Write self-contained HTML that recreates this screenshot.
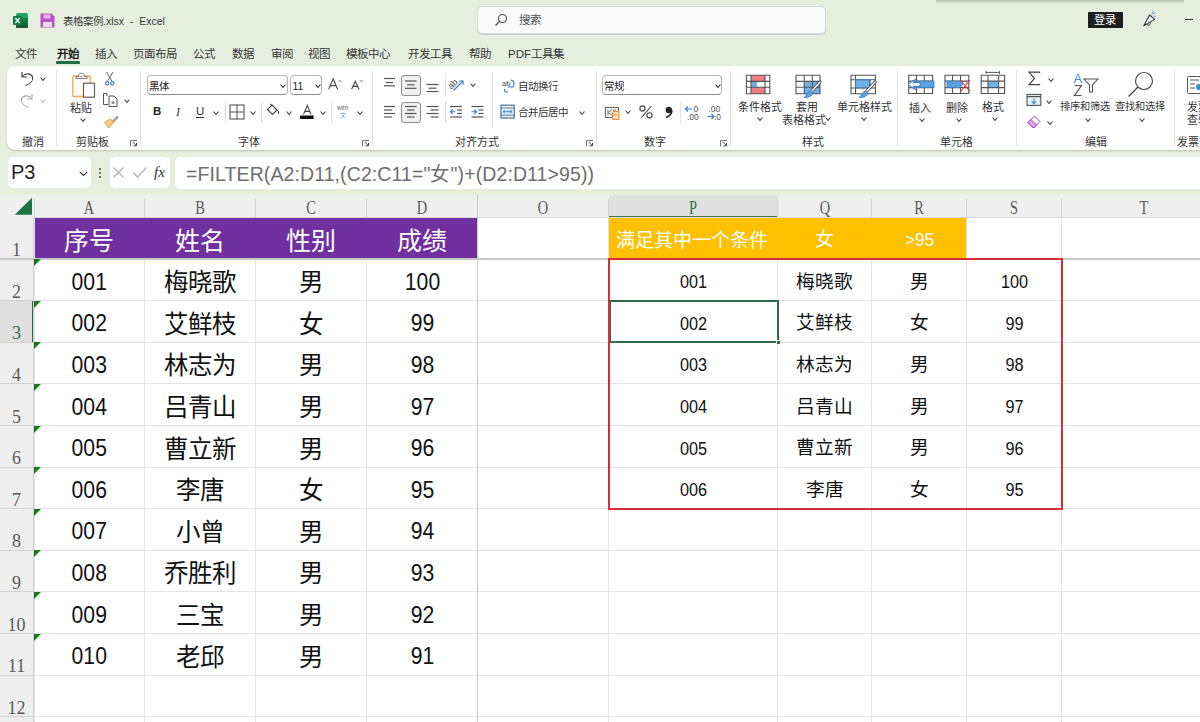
<!DOCTYPE html><html lang="zh-CN"><head><meta charset="utf-8"><style>
*{margin:0;padding:0;box-sizing:border-box}
html,body{width:1200px;height:722px;overflow:hidden}
body{background:#e6efde;font-family:"Liberation Sans",sans-serif;position:relative;color:#222}
.a{position:absolute}
.t{position:absolute;white-space:nowrap;line-height:1}
svg{position:absolute;overflow:visible}
</style></head><body>
<div class="a" style="left:936px;top:0;width:248px;height:4px;background:linear-gradient(to bottom, rgba(120,140,110,0.45), rgba(200,215,190,0))"></div>
<svg style="left:13px;top:13px" width="15" height="15" viewBox="0 0 15 15"><rect x="3" y="0" width="12" height="15" rx="1.5" fill="#21a366"/><rect x="3" y="5" width="12" height="5" fill="#107c41"/><rect x="3" y="10" width="12" height="5" rx="1" fill="#185c37"/><rect x="0" y="3" width="9" height="9" rx="1" fill="#107c41"/><path d="M2.3 5 L6.7 10 M6.7 5 L2.3 10" stroke="#fff" stroke-width="1.3"/></svg>
<svg style="left:40px;top:13px" width="15" height="15" viewBox="0 0 15 15"><path d="M1 0.5 H11.5 L14.5 3.5 V14.5 H0.5 V1 Z" fill="#b94fc2"/><rect x="3.5" y="1.5" width="7" height="4" fill="#e8b8ec"/><rect x="3" y="9" width="9" height="5" fill="#f2d6f4"/></svg>
<div class="t" style="left:63px;top:16px;font-size:10.5px;color:#3a3a3a">表格案例.xlsx&nbsp;&nbsp;-&nbsp;&nbsp;Excel</div>
<div class="a" style="left:478px;top:7px;width:347px;height:26px;background:#fafafa;border-radius:4px;box-shadow:0 0 0 1px #d6dcd2, 0 1px 0 1px #c9cfc6"></div>
<svg style="left:494px;top:13px" width="14" height="14" viewBox="0 0 14 14"><circle cx="8.5" cy="5.5" r="4" fill="none" stroke="#444" stroke-width="1.1"/><path d="M5.6 8.4 L1.5 12.5" stroke="#444" stroke-width="1.2"/></svg>
<div class="t" style="left:518.5px;top:14.5px;font-size:11.5px;color:#555">搜索</div>
<div class="a" style="left:1088px;top:12px;width:35px;height:16px;background:#1f1f1f"></div>
<div class="t" style="left:1094px;top:14.6px;font-size:11.2px;color:#fff">登录</div>
<svg style="left:1135px;top:8px" width="30" height="24" viewBox="1135 8 30 24"><path d="M1143.8 25.8 L1149.6 15 L1154.6 19.4 Z" fill="#fff" stroke="#333" stroke-width="1.1" stroke-linejoin="round"/><path d="M1146.6 24 C1147.8 26 1150.6 25.6 1150.4 22.6" fill="none" stroke="#333" stroke-width="1"/><path d="M1151.5 14.5 L1155.5 12.5 M1153.5 16 L1156 16.5 M1152.5 13 L1153 10.5" stroke="#5aa0d0" stroke-width="0.9"/></svg>
<div class="a" style="left:1185px;top:19px;width:8px;height:1.2px;background:#333"></div>
<div class="t" style="left:15px;top:49px;font-size:11.5px;color:#333;">文件</div>
<div class="t" style="left:57px;top:49px;font-size:11.5px;color:#333;font-weight:bold;color:#1b1b1b;">开始</div>
<div class="t" style="left:95px;top:49px;font-size:11.5px;color:#333;">插入</div>
<div class="t" style="left:133px;top:49px;font-size:11.5px;color:#333;">页面布局</div>
<div class="t" style="left:193px;top:49px;font-size:11.5px;color:#333;">公式</div>
<div class="t" style="left:232px;top:49px;font-size:11.5px;color:#333;">数据</div>
<div class="t" style="left:271px;top:49px;font-size:11.5px;color:#333;">审阅</div>
<div class="t" style="left:308px;top:49px;font-size:11.5px;color:#333;">视图</div>
<div class="t" style="left:346px;top:49px;font-size:11.5px;color:#333;">模板中心</div>
<div class="t" style="left:408px;top:49px;font-size:11.5px;color:#333;">开发工具</div>
<div class="t" style="left:469px;top:49px;font-size:11.5px;color:#333;">帮助</div>
<div class="t" style="left:508px;top:49px;font-size:11.5px;color:#333;">PDF工具集</div>
<div class="a" style="left:56px;top:61px;width:24px;height:2.5px;border-radius:1px;background:#1e7145"></div>
<div class="a" style="left:7px;top:66px;width:1220px;height:84px;background:#fff;border-radius:8px;box-shadow:0 1px 2px rgba(0,0,0,0.18)"></div>
<svg style="left:19px;top:70px" width="16" height="17" viewBox="0 0 16 17"><path d="M3 2 V7 H8" fill="none" stroke="#444" stroke-width="1.2"/><path d="M3.5 6.5 C6 3 12 3 13.5 7 C14.5 10 12 13.5 6.5 15.5" fill="none" stroke="#444" stroke-width="1.2"/></svg>
<svg style="left:40px;top:77px" width="6" height="4" viewBox="0 0 6 4"><path d="M0.5 0.5 L3.0 3.3 L5.5 0.5" fill="none" stroke="#444" stroke-width="1.1"/></svg>
<svg style="left:19px;top:92px" width="16" height="17" viewBox="0 0 16 17"><path d="M13 2 V7 H8" fill="none" stroke="#aaa" stroke-width="1.2"/><path d="M12.5 6.5 C10 3 4 3 2.5 7 C1.5 10 4 13.5 9.5 15.5" fill="none" stroke="#aaa" stroke-width="1.2"/></svg>
<svg style="left:40px;top:99px" width="6" height="4" viewBox="0 0 6 4"><path d="M0.5 0.5 L3.0 3.3 L5.5 0.5" fill="none" stroke="#bbb" stroke-width="1.1"/></svg>
<div class="t" style="left:22px;top:137.10000000000002px;font-size:11px;color:#333;">撤消</div>
<div class="a" style="left:56px;top:70px;width:1px;height:76px;background:#e3e3e3"></div>
<svg style="left:66px;top:68px" width="60" height="62" viewBox="0 0 60 62"><rect x="6.8" y="8" width="17.5" height="20.5" rx="1" fill="#fffaf3" stroke="#f2a65a" stroke-width="1.3"/><path d="M10 8.5 H21 V10.5 H10 Z" fill="#eef3f8" stroke="#777" stroke-width="0.9"/><path d="M12.5 8.5 C12.5 6 13.5 5.2 15.5 5.2 C17.5 5.2 18.5 6 18.5 8.5" fill="#fff" stroke="#777" stroke-width="0.9"/><rect x="17.5" y="15.2" width="11" height="14" fill="#fff" stroke="#555" stroke-width="1.1"/><path d="M40.5 4 L47 15 M47 4 L40.5 15" stroke="#555" stroke-width="0.9"/><circle cx="41.2" cy="15.3" r="1.7" fill="#fff" stroke="#3a7fc4" stroke-width="1.1"/><circle cx="46.3" cy="15.3" r="1.7" fill="#fff" stroke="#3a7fc4" stroke-width="1.1"/><path d="M41 28 V25.5 H37.5 V36.5 H42" fill="none" stroke="#555" stroke-width="1"/><path d="M43 28 H48 L51 31 V38.5 H43 Z" fill="#fff" stroke="#555" stroke-width="1"/><rect x="45.5" y="33" width="3" height="3" fill="#999"/><path d="M45.5 54 L50.5 49 C51.5 48 52.5 49 51.5 50 L46.5 55" fill="#fff" stroke="#555" stroke-width="1"/><path d="M38.5 54.5 L44.5 51 L47.5 54 L43 60 Z" fill="#f7c98b" stroke="#e89545" stroke-width="1"/></svg>
<div class="t" style="left:70px;top:102.8px;font-size:11px;color:#333;">粘贴</div>
<svg style="left:79.5px;top:118px" width="6" height="4" viewBox="0 0 6 4"><path d="M0.5 0.5 L3.0 3.3 L5.5 0.5" fill="none" stroke="#444" stroke-width="1.1"/></svg>
<svg style="left:123.5px;top:99px" width="6" height="4" viewBox="0 0 6 4"><path d="M0.5 0.5 L3.0 3.3 L5.5 0.5" fill="none" stroke="#444" stroke-width="1.1"/></svg>
<div class="t" style="left:76px;top:137.10000000000002px;font-size:11px;color:#333;">剪贴板</div>
<svg style="left:130px;top:140px" width="8" height="7" viewBox="0 0 8 7"><path d="M0.5 6.5 V0.5 H7" fill="none" stroke="#666" stroke-width="0.9"/><path d="M2.5 1.8 L6.5 5.8 M6.5 2.8 V5.8 H3.5" fill="none" stroke="#444" stroke-width="1"/></svg>
<div class="a" style="left:140px;top:70px;width:1px;height:76px;background:#e3e3e3"></div>
<div class="a" style="left:146.5px;top:75px;width:141.0px;height:20px;border:1px solid #b8b8b8;border-bottom-color:#8a8a8a;border-radius:4px;background:#fff"></div>
<div class="t" style="left:149.0px;top:81.3px;font-size:10.5px;color:#222;">黑体</div>
<svg style="left:280px;top:84px" width="6" height="4" viewBox="0 0 6 4"><path d="M0.5 0.5 L3.0 3.3 L5.5 0.5" fill="none" stroke="#333" stroke-width="1.1"/></svg>
<div class="a" style="left:289.5px;top:75px;width:32.0px;height:20px;border:1px solid #b8b8b8;border-bottom-color:#8a8a8a;border-radius:4px;background:#fff"></div>
<div class="t" style="left:292.5px;top:80.5px;font-size:10.5px;color:#222;">11</div>
<svg style="left:315px;top:84px" width="6" height="4" viewBox="0 0 6 4"><path d="M0.5 0.5 L3.0 3.3 L5.5 0.5" fill="none" stroke="#333" stroke-width="1.1"/></svg>
<svg style="left:320px;top:70px" width="50" height="25" viewBox="0 0 50 25"><path d="M8.7 19.2 L13.2 8.9 L17.6 19.2 M10.3 15.6 H16.1" fill="none" stroke="#444" stroke-width="1.1"/><path d="M18.5 12 L20 10.3 L21.5 12" fill="none" stroke="#3a7fc4" stroke-width="0.9"/><path d="M31.6 19.2 L35.3 11.2 L39 19.2 M32.9 16.4 H37.7" fill="none" stroke="#444" stroke-width="1.1"/><path d="M40 10.2 L41.5 11.7 L43 10.2" fill="none" stroke="#3a7fc4" stroke-width="0.9"/></svg>
<div class="t" style="left:153px;top:106px;font-size:11.5px;color:#222;font-weight:bold">B</div>
<div class="t" style="left:176px;top:106px;font-size:12px;color:#444;font-family:'Liberation Serif',serif;font-style:italic">I</div>
<div class="t" style="left:196px;top:106px;font-size:11.5px;color:#333;">U</div>
<div class="a" style="left:196px;top:117px;width:8px;height:1px;background:#333"></div>
<svg style="left:213px;top:111px" width="6" height="4" viewBox="0 0 6 4"><path d="M0.5 0.5 L3.0 3.3 L5.5 0.5" fill="none" stroke="#444" stroke-width="1.1"/></svg>
<div class="a" style="left:225px;top:102px;width:1px;height:21px;background:#e3e3e3"></div>
<svg style="left:229px;top:104px" width="15" height="15" viewBox="0 0 15 15"><rect x="1" y="1" width="14" height="14" fill="none" stroke="#555" stroke-width="1.1"/><path d="M8 1 V15 M1 8 H15" stroke="#555" stroke-width="1.1"/></svg>
<svg style="left:250px;top:111px" width="6" height="4" viewBox="0 0 6 4"><path d="M0.5 0.5 L3.0 3.3 L5.5 0.5" fill="none" stroke="#444" stroke-width="1.1"/></svg>
<div class="a" style="left:261px;top:102px;width:1px;height:21px;background:#e3e3e3"></div>
<svg style="left:266px;top:103px" width="14" height="13" viewBox="0 0 14 13"><path d="M6 2 L11 7 L6.5 11.5 L1.5 6.5 Z" fill="#fff" stroke="#444" stroke-width="1.1"/><path d="M11 7 C13 8 13 10 12 11" fill="none" stroke="#444" stroke-width="1"/><path d="M4 1 L6 2" stroke="#444"/></svg>
<svg style="left:286px;top:111px" width="6" height="4" viewBox="0 0 6 4"><path d="M0.5 0.5 L3.0 3.3 L5.5 0.5" fill="none" stroke="#444" stroke-width="1.1"/></svg>
<svg style="left:298px;top:102px" width="18" height="18" viewBox="0 0 18 18"><path d="M5.5 12.4 L9.3 3.5 L13 12.4 M6.8 9.4 H11.8" fill="none" stroke="#444" stroke-width="1.1"/><rect x="2" y="13.5" width="13.6" height="3.5" fill="#111"/></svg>
<svg style="left:320px;top:111px" width="6" height="4" viewBox="0 0 6 4"><path d="M0.5 0.5 L3.0 3.3 L5.5 0.5" fill="none" stroke="#444" stroke-width="1.1"/></svg>
<div class="a" style="left:331px;top:102px;width:1px;height:21px;background:#e3e3e3"></div>
<div class="t" style="left:337px;top:104.5px;font-size:6.3px;color:#666;">wén</div>
<div class="t" style="left:340.3px;top:113.0px;font-size:5.8px;color:#5aa0d8;">文</div>
<svg style="left:357px;top:111px" width="6" height="4" viewBox="0 0 6 4"><path d="M0.5 0.5 L3.0 3.3 L5.5 0.5" fill="none" stroke="#444" stroke-width="1.1"/></svg>
<div class="t" style="left:238px;top:137.10000000000002px;font-size:11px;color:#333;">字体</div>
<svg style="left:362px;top:140px" width="8" height="7" viewBox="0 0 8 7"><path d="M0.5 6.5 V0.5 H7" fill="none" stroke="#666" stroke-width="0.9"/><path d="M2.5 1.8 L6.5 5.8 M6.5 2.8 V5.8 H3.5" fill="none" stroke="#444" stroke-width="1"/></svg>
<div class="a" style="left:372px;top:70px;width:1px;height:76px;background:#e3e3e3"></div>
<div class="a" style="left:401px;top:75px;width:20px;height:20.5px;border:1px solid #8c8c8c;border-radius:3px;background:#f0f0f0"></div>
<div class="a" style="left:401px;top:102px;width:20px;height:20.5px;border:1px solid #8c8c8c;border-radius:3px;background:#f0f0f0"></div>
<svg style="left:0;top:0" width="600" height="150" viewBox="0 0 600 150"><path d="M384 78.5 H395" stroke="#555" stroke-width="1.2"/><path d="M386 82.5 H393" stroke="#555" stroke-width="1.2"/><path d="M384 85.8 H395" stroke="#555" stroke-width="1.2"/><path d="M405 81 H416.5" stroke="#555" stroke-width="1.2"/><path d="M407 84.8 H414.5" stroke="#555" stroke-width="1.2"/><path d="M405 88.3 H416.5" stroke="#555" stroke-width="1.2"/><path d="M426.5 84.5 H438.5" stroke="#555" stroke-width="1.2"/><path d="M428.5 88.2 H436.5" stroke="#555" stroke-width="1.2"/><path d="M426.5 91.5 H438.5" stroke="#555" stroke-width="1.2"/><path d="M384 106.5 H395" stroke="#555" stroke-width="1.2"/><path d="M384 110 H392" stroke="#555" stroke-width="1.2"/><path d="M384 113.5 H395" stroke="#555" stroke-width="1.2"/><path d="M384 117 H392" stroke="#555" stroke-width="1.2"/><path d="M405 106.5 H416.5" stroke="#555" stroke-width="1.2"/><path d="M407 110 H414.5" stroke="#555" stroke-width="1.2"/><path d="M405 113.5 H416.5" stroke="#555" stroke-width="1.2"/><path d="M407 117 H414.5" stroke="#555" stroke-width="1.2"/><path d="M426.5 106.5 H438.5" stroke="#555" stroke-width="1.2"/><path d="M430.5 110 H438.5" stroke="#555" stroke-width="1.2"/><path d="M426.5 113.5 H438.5" stroke="#555" stroke-width="1.2"/><path d="M430.5 117 H438.5" stroke="#555" stroke-width="1.2"/><path d="M450 106.5 H462" stroke="#555" stroke-width="1.2"/><path d="M457 110 H462" stroke="#555" stroke-width="1.2"/><path d="M457 113.5 H462" stroke="#555" stroke-width="1.2"/><path d="M450 117 H462" stroke="#555" stroke-width="1.2"/><path d="M455.5 111.8 H450.5 M452.8 109.5 L450.5 111.8 L452.8 114" fill="none" stroke="#3a7fc4" stroke-width="1.1"/><path d="M471.5 106.5 H483.5" stroke="#555" stroke-width="1.2"/><path d="M478.5 110 H483.5" stroke="#555" stroke-width="1.2"/><path d="M478.5 113.5 H483.5" stroke="#555" stroke-width="1.2"/><path d="M471.5 117 H483.5" stroke="#555" stroke-width="1.2"/><path d="M471.5 111.8 H476.5 M474.2 109.5 L476.5 111.8 L474.2 114" fill="none" stroke="#3a7fc4" stroke-width="1.1"/><path d="M453.5 90.5 L463 81" stroke="#3a7fc4" stroke-width="1.1"/><path d="M459 81 H463 V85" fill="none" stroke="#3a7fc4" stroke-width="1.1"/></svg>
<div class="t" style="left:448px;top:80px;font-size:9px;color:#444;transform:rotate(-45deg);transform-origin:50% 50%">ab</div>
<svg style="left:470px;top:83px" width="6" height="4" viewBox="0 0 6 4"><path d="M0.5 0.5 L3.0 3.3 L5.5 0.5" fill="none" stroke="#444" stroke-width="1.1"/></svg>
<div class="a" style="left:445px;top:74px;width:1px;height:22px;background:#e3e3e3"></div>
<div class="a" style="left:445px;top:101px;width:1px;height:22px;background:#e3e3e3"></div>
<div class="a" style="left:492px;top:73px;width:1px;height:54px;background:#e3e3e3"></div>
<svg style="left:502px;top:79px" width="14" height="14" viewBox="0 0 14 14"><text x="0" y="7" font-size="7.5" fill="#444" font-family="Liberation Sans">ab</text><path d="M9 1 C13 2 13 8 9 8 H6" fill="none" stroke="#3a7fc4" stroke-width="1.1"/><path d="M3 10 C1 12 4 13 6 13" fill="none" stroke="#3a7fc4" stroke-width="1.1"/></svg>
<div class="t" style="left:518.3px;top:80.8px;font-size:10.5px;color:#333;">自动换行</div>
<svg style="left:500px;top:104px" width="16" height="16" viewBox="0 0 16 16"><rect x="1" y="1.2" width="13.2" height="12.8" fill="#f4f8fc" stroke="#4a6f92" stroke-width="1.2"/><path d="M1 4 H14.2 M1 11.2 H14.2" stroke="#4a6f92" stroke-width="0.9"/><rect x="2" y="5.5" width="11.2" height="4.4" fill="#cfe3f5"/><path d="M3.2 7.7 H12 M4.8 6.2 L3.2 7.7 L4.8 9.2 M10.4 6.2 L12 7.7 L10.4 9.2" fill="none" stroke="#3a7fc4" stroke-width="0.9"/></svg>
<div class="t" style="left:518.3px;top:107.3px;font-size:10.5px;color:#333;">合并后居中</div>
<svg style="left:579px;top:111px" width="6" height="4" viewBox="0 0 6 4"><path d="M0.5 0.5 L3.0 3.3 L5.5 0.5" fill="none" stroke="#444" stroke-width="1.1"/></svg>
<div class="t" style="left:455px;top:137.10000000000002px;font-size:11px;color:#333;">对齐方式</div>
<svg style="left:586px;top:140px" width="8" height="7" viewBox="0 0 8 7"><path d="M0.5 6.5 V0.5 H7" fill="none" stroke="#666" stroke-width="0.9"/><path d="M2.5 1.8 L6.5 5.8 M6.5 2.8 V5.8 H3.5" fill="none" stroke="#444" stroke-width="1"/></svg>
<div class="a" style="left:596px;top:70px;width:1px;height:76px;background:#e3e3e3"></div>
<div class="a" style="left:601.5px;top:75px;width:120.0px;height:20px;border:1px solid #b8b8b8;border-bottom-color:#8a8a8a;border-radius:4px;background:#fff"></div>
<div class="t" style="left:604.0px;top:81.3px;font-size:10.5px;color:#222;">常规</div>
<svg style="left:714.5px;top:84px" width="6" height="4" viewBox="0 0 6 4"><path d="M0.5 0.5 L3.0 3.3 L5.5 0.5" fill="none" stroke="#333" stroke-width="1.1"/></svg>
<svg style="left:605px;top:107px" width="16" height="13" viewBox="0 0 16 13"><rect x="0.5" y="0.5" width="13" height="10" fill="#fff" stroke="#666" stroke-width="1.1"/><path d="M3 2.5 V8.5 M7 2.5 L3.5 5.5 L7 8.5 M8 3 H11" fill="none" stroke="#666" stroke-width="1"/><rect x="7.5" y="4.5" width="6.5" height="8" rx="1" fill="#fde2c4" stroke="#f08a2b" stroke-width="1.1"/><path d="M9 8 H12.5" stroke="#f08a2b" stroke-width="0.9"/></svg>
<svg style="left:625px;top:110px" width="6" height="4" viewBox="0 0 6 4"><path d="M0.5 0.5 L3.0 3.3 L5.5 0.5" fill="none" stroke="#444" stroke-width="1.1"/></svg>
<svg style="left:639px;top:105px" width="15" height="14" viewBox="0 0 15 14"><circle cx="3.5" cy="3.5" r="2.6" fill="none" stroke="#444" stroke-width="1.1"/><circle cx="10.5" cy="10.3" r="2.6" fill="none" stroke="#444" stroke-width="1.1"/><path d="M12.5 1 L2 13" stroke="#444" stroke-width="1.1"/></svg>
<svg style="left:664px;top:106px" width="9" height="12" viewBox="0 0 9 12"><circle cx="4.8" cy="4" r="3.2" fill="#222"/><path d="M7.8 4 C8 7.5 6 10 2 11.5" fill="none" stroke="#222" stroke-width="1.6"/></svg>
<div class="a" style="left:680px;top:102px;width:1px;height:22px;background:#e3e3e3"></div>
<svg style="left:683px;top:104px" width="17" height="17" viewBox="0 0 17 17"><text x="10.5" y="8" font-size="8.5" fill="#555" font-family="Liberation Sans">0</text><text x="4" y="15.5" font-size="8.5" fill="#555" font-family="Liberation Sans">.00</text><path d="M9 5 H2.5 M5 2.5 L2.5 5 L5 7.5" fill="none" stroke="#3a7fc4" stroke-width="1.2"/></svg>
<svg style="left:706px;top:104px" width="17" height="17" viewBox="0 0 17 17"><text x="2.5" y="8" font-size="8.5" fill="#555" font-family="Liberation Sans">.00</text><text x="8" y="15.5" font-size="8.5" fill="#555" font-family="Liberation Sans">.0</text><path d="M1.5 12.5 H8 M5.5 10 L8 12.5 L5.5 15" fill="none" stroke="#3a7fc4" stroke-width="1.2"/></svg>
<div class="t" style="left:644px;top:137.10000000000002px;font-size:11px;color:#333;">数字</div>
<svg style="left:720px;top:140px" width="8" height="7" viewBox="0 0 8 7"><path d="M0.5 6.5 V0.5 H7" fill="none" stroke="#666" stroke-width="0.9"/><path d="M2.5 1.8 L6.5 5.8 M6.5 2.8 V5.8 H3.5" fill="none" stroke="#444" stroke-width="1"/></svg>
<div class="a" style="left:730px;top:70px;width:1px;height:76px;background:#e3e3e3"></div>
<svg style="left:740px;top:68px" width="40" height="30" viewBox="0 0 40 30"><rect x="11" y="7.2" width="14" height="6.2" fill="#f37b82"/><rect x="11" y="13.4" width="6" height="5.9" fill="#6fb0ea"/><rect x="11" y="19.3" width="14" height="6.4" fill="#f37b82"/><path d="M6.4 7.2 H29.8 V25.7 H6.4 Z M11 7.2 V25.7 M25 7.2 V25.7 M6.4 13.4 H29.8 M6.4 19.3 H29.8" fill="none" stroke="#555" stroke-width="1.1"/></svg>
<div class="t" style="left:738px;top:101.8px;font-size:11px;color:#333;">条件格式</div>
<svg style="left:757px;top:117px" width="6" height="4" viewBox="0 0 6 4"><path d="M0.5 0.5 L3.0 3.3 L5.5 0.5" fill="none" stroke="#444" stroke-width="1.1"/></svg>
<svg style="left:780px;top:68px" width="50" height="32" viewBox="0 0 50 32"><rect x="24.2" y="13.4" width="15.8" height="12.3" fill="#6fb0ea"/><path d="M16 7.2 H40 V25.7 H16 Z M24.2 7.2 V25.7 M32.3 7.2 V25.7 M16 13.4 H40 M16 19.3 H40" fill="none" stroke="#555" stroke-width="1.1"/><g transform="translate(23 13)"><path d="M17 1 L8 11" stroke="#444" stroke-width="3.2" stroke-linecap="round"/><path d="M17 1 L8 11" stroke="#fff" stroke-width="1.4" stroke-linecap="round"/><path d="M7.5 10 C4.5 10.5 4 14 1 16.5 C5.5 17 9.5 15 9.8 12 Z" fill="#5aa0e0" stroke="#3a7fc4" stroke-width="0.8"/></g></svg>
<div class="t" style="left:796px;top:101.8px;font-size:11px;color:#333;">套用</div>
<div class="t" style="left:782px;top:114.8px;font-size:11px;color:#333;">表格格式</div>
<svg style="left:825px;top:117px" width="6" height="4" viewBox="0 0 6 4"><path d="M0.5 0.5 L3.0 3.3 L5.5 0.5" fill="none" stroke="#444" stroke-width="1.1"/></svg>
<svg style="left:840px;top:68px" width="50" height="32" viewBox="0 0 50 32"><rect x="16" y="12" width="14" height="8" fill="#6fb0ea"/><path d="M11 7.2 H35.4 V25.7 H11 Z M15.5 7.2 V25.7 M11 11.7 H35.4 M11 20 H35.4 M30 11.7 V20" fill="none" stroke="#555" stroke-width="1.1"/><rect x="15.5" y="11.7" width="14.5" height="8.3" fill="none" stroke="#3a7fc4" stroke-width="0.8"/><g transform="translate(18 13)"><path d="M17 1 L8 11" stroke="#444" stroke-width="3.2" stroke-linecap="round"/><path d="M17 1 L8 11" stroke="#fff" stroke-width="1.4" stroke-linecap="round"/><path d="M7.5 10 C4.5 10.5 4 14 1 16.5 C5.5 17 9.5 15 9.8 12 Z" fill="#5aa0e0" stroke="#3a7fc4" stroke-width="0.8"/></g></svg>
<div class="t" style="left:836.5px;top:101.8px;font-size:11px;color:#333;">单元格样式</div>
<svg style="left:861px;top:117px" width="6" height="4" viewBox="0 0 6 4"><path d="M0.5 0.5 L3.0 3.3 L5.5 0.5" fill="none" stroke="#444" stroke-width="1.1"/></svg>
<div class="t" style="left:802px;top:137.10000000000002px;font-size:11px;color:#333;">样式</div>
<div class="a" style="left:897px;top:70px;width:1px;height:76px;background:#e3e3e3"></div>
<svg style="left:900px;top:66px" width="40" height="32" viewBox="0 0 40 32"><path d="M8.7 9.2 H32.6 V27.5 H8.7 Z M16.5 9.2 V27.5 M24.3 9.2 V27.5 M8.7 15.1 H32.6 M8.7 21.6 H32.6" fill="none" stroke="#555" stroke-width="1.1"/><rect x="13" y="15.1" width="21" height="6.5" fill="#5aa0e0" stroke="#3a7fc4" stroke-width="0.8"/><path d="M20 16.5 H13 L15.5 13 L8 18.4 L15.5 23.8 L13 20.3 H20 Z" fill="#fff" stroke="#3a7fc4" stroke-width="1"/></svg>
<div class="t" style="left:909px;top:103.3px;font-size:11px;color:#333;">插入</div>
<svg style="left:919px;top:118px" width="6" height="4" viewBox="0 0 6 4"><path d="M0.5 0.5 L3.0 3.3 L5.5 0.5" fill="none" stroke="#444" stroke-width="1.1"/></svg>
<svg style="left:940px;top:66px" width="36" height="32" viewBox="0 0 36 32"><path d="M5 9.2 H28.8 V27.5 H5 Z M12.5 9.2 V27.5 M20.5 9.2 V27.5 M5 15.1 H28.8 M5 21.6 H28.8" fill="none" stroke="#555" stroke-width="1.1"/><path d="M7 15.1 H20 L23 18.4 L20 21.6 H7 Z" fill="#5aa0e0" stroke="#3a7fc4" stroke-width="0.8"/><path d="M20.5 14 L30 25.5 M30 14 L20.5 25.5" stroke="#e0303a" stroke-width="1.1"/></svg>
<div class="t" style="left:946px;top:103.3px;font-size:11px;color:#333;">删除</div>
<svg style="left:956px;top:118px" width="6" height="4" viewBox="0 0 6 4"><path d="M0.5 0.5 L3.0 3.3 L5.5 0.5" fill="none" stroke="#444" stroke-width="1.1"/></svg>
<svg style="left:975px;top:66px" width="36" height="32" viewBox="0 0 36 32"><rect x="13" y="15.1" width="10.6" height="6.5" fill="#6fb0ea"/><path d="M6.2 9.2 H29.6 V27.5 H6.2 Z M13 9.2 V27.5 M23.6 9.2 V27.5 M6.2 15.1 H29.6 M6.2 21.6 H29.6" fill="none" stroke="#555" stroke-width="1.1"/><path d="M11 6.4 H24.6 M11 4.9 V7.9 M24.6 4.9 V7.9" stroke="#555" stroke-width="1"/></svg>
<div class="t" style="left:982px;top:101.8px;font-size:11px;color:#333;">格式</div>
<svg style="left:992px;top:117px" width="6" height="4" viewBox="0 0 6 4"><path d="M0.5 0.5 L3.0 3.3 L5.5 0.5" fill="none" stroke="#444" stroke-width="1.1"/></svg>
<div class="t" style="left:940px;top:137.10000000000002px;font-size:11px;color:#333;">单元格</div>
<div class="a" style="left:1016px;top:70px;width:1px;height:76px;background:#e3e3e3"></div>
<svg style="left:1026px;top:70px" width="16" height="16" viewBox="0 0 16 16"><path d="M13.5 3 V2.2 H3 L8.5 8.4 L3 14.6 H13.5 V13.8" fill="none" stroke="#444" stroke-width="1.2"/></svg>
<svg style="left:1047.5px;top:78px" width="6" height="4" viewBox="0 0 6 4"><path d="M0.5 0.5 L3.0 3.3 L5.5 0.5" fill="none" stroke="#444" stroke-width="1.1"/></svg>
<svg style="left:1026px;top:93px" width="16" height="14" viewBox="0 0 16 14"><rect x="1" y="1.4" width="13.8" height="11" fill="#e4f0fa" stroke="#555" stroke-width="1.1"/><path d="M1 3.6 H14.8" stroke="#555" stroke-width="1.3"/><path d="M7.9 5.5 V10.5 M5.6 8.3 L7.9 10.6 L10.2 8.3" fill="none" stroke="#3a8fd0" stroke-width="1.1"/></svg>
<svg style="left:1046px;top:100px" width="6" height="4" viewBox="0 0 6 4"><path d="M0.5 0.5 L3.0 3.3 L5.5 0.5" fill="none" stroke="#444" stroke-width="1.1"/></svg>
<svg style="left:1026px;top:114px" width="16" height="15" viewBox="0 0 16 15"><path d="M2 8.5 L8.5 2 L14 7.5 L7.5 14 Z" fill="#fff" stroke="#9b3fb0" stroke-width="1"/><path d="M5 5.5 L10.5 11 L7.5 14 L2 8.5 Z" fill="#e3a8ef" stroke="#9b3fb0" stroke-width="1"/></svg>
<svg style="left:1046.5px;top:121px" width="6" height="4" viewBox="0 0 6 4"><path d="M0.5 0.5 L3.0 3.3 L5.5 0.5" fill="none" stroke="#444" stroke-width="1.1"/></svg>
<svg style="left:1072px;top:72px" width="28" height="26" viewBox="0 0 28 26"><text x="1.5" y="11.3" font-size="13" fill="#3a8fd0" font-family="Liberation Sans">A</text><path d="M2.7 13.5 H9.5 L2.5 23.5 H9.5" fill="none" stroke="#555" stroke-width="1.2"/><path d="M12 7 H26 L20.5 13 V20 H17.5 V13 Z" fill="none" stroke="#555" stroke-width="1.1"/></svg>
<div class="t" style="left:1060.3px;top:102.3px;font-size:10.2px;color:#333;">排序和筛选</div>
<svg style="left:1085px;top:118px" width="6" height="4" viewBox="0 0 6 4"><path d="M0.5 0.5 L3.0 3.3 L5.5 0.5" fill="none" stroke="#444" stroke-width="1.1"/></svg>
<svg style="left:1127px;top:71px" width="28" height="27" viewBox="0 0 28 27"><circle cx="17" cy="10" r="8.5" fill="none" stroke="#444" stroke-width="1.1"/><path d="M11 16 L1.5 25.5" stroke="#444" stroke-width="1.2"/></svg>
<div class="t" style="left:1114.8px;top:102.3px;font-size:10.2px;color:#333;">查找和选择</div>
<svg style="left:1139px;top:118px" width="6" height="4" viewBox="0 0 6 4"><path d="M0.5 0.5 L3.0 3.3 L5.5 0.5" fill="none" stroke="#444" stroke-width="1.1"/></svg>
<div class="t" style="left:1085px;top:137.10000000000002px;font-size:11px;color:#333;">编辑</div>
<div class="a" style="left:1174px;top:70px;width:1px;height:76px;background:#e3e3e3"></div>
<svg style="left:1187px;top:76px" width="16" height="18" viewBox="0 0 16 18"><rect x="0.5" y="0.5" width="15" height="17" rx="1" fill="none" stroke="#555" stroke-width="1"/><path d="M3 4 H12 M3 8 H8 M3 12 H8" stroke="#555"/><circle cx="12" cy="11" r="3" fill="#3a8fd0"/></svg>
<div class="t" style="left:1187px;top:102.3px;font-size:11px;color:#333;">发票</div>
<div class="t" style="left:1187px;top:114.8px;font-size:11px;color:#333;">查验</div>
<div class="t" style="left:1177px;top:137.10000000000002px;font-size:11px;color:#333;">发票查验</div>
<div class="a" style="left:8px;top:157px;width:83px;height:31px;background:#fff;border-radius:5px"></div>
<div class="t" style="left:11px;top:162px;font-size:20px;color:#222">P3</div>
<svg style="left:79px;top:171px" width="9" height="6" viewBox="0 0 9 6"><path d="M0.8 0.8 L4.5 4.5 L8.2 0.8" fill="none" stroke="#333" stroke-width="1.2"/></svg>
<div class="a" style="left:99px;top:167.5px;width:2px;height:2px;border-radius:1px;background:#444"></div>
<div class="a" style="left:99px;top:171.5px;width:2px;height:2px;border-radius:1px;background:#444"></div>
<div class="a" style="left:99px;top:175.5px;width:2px;height:2px;border-radius:1px;background:#444"></div>
<div class="a" style="left:110px;top:157px;width:60px;height:31px;background:#fff;border-radius:5px"></div>
<svg style="left:112px;top:166px" width="13" height="13" viewBox="0 0 13 13"><path d="M1.5 1.5 L11.5 11.5 M11.5 1.5 L1.5 11.5" stroke="#b0b0b0" stroke-width="1.2"/></svg>
<svg style="left:132px;top:166px" width="16" height="13" viewBox="0 0 16 13"><path d="M1.5 6.5 L5.5 11 L14.5 1.5" fill="none" stroke="#b0b0b0" stroke-width="1.2"/></svg>
<div class="t" style="left:154px;top:165px;font-size:15px;color:#333;font-family:'Liberation Serif',serif;font-style:italic">fx</div>
<div class="a" style="left:175px;top:157px;width:1100px;height:31.5px;background:#fff;border-radius:5px"></div>
<div class="t" style="left:186px;top:164.5px;font-size:19.5px;color:#6e6e6e;letter-spacing:0.1px">=FILTER(A2:D11,(C2:C11=&quot;女&quot;)+(D2:D11&gt;95))</div>
<div class="a" style="left:0;top:195px;width:1200px;height:527px;background:#fff"></div>
<div class="a" style="left:0;top:195px;width:1200px;height:22.5px;background:#efefef"></div>
<div class="a" style="left:0;top:217.5px;width:34px;height:504.5px;background:#efefef"></div>
<div class="a" style="left:608.5px;top:195px;width:169.0px;height:22.5px;background:#e0e0e0;border-bottom:2px solid #3d7a50"></div>
<div class="a" style="left:0;top:300.7px;width:34px;height:41.6px;background:#e0e0e0;border-right:2px solid #2a6a3e"></div>
<div class="a" style="left:34px;top:217.5px;width:443.5px;height:41.6px;background:#7030a0"></div>
<div class="a" style="left:608.5px;top:217.5px;width:358.0px;height:41.6px;background:#ffc000"></div>
<div class="a" style="left:33.5px;top:199px;width:1px;height:18.5px;background:#d4d4d4"></div>
<div class="a" style="left:33.5px;top:217.5px;width:1px;height:504.5px;background:#e4e4e4"></div>
<div class="a" style="left:144.0px;top:199px;width:1px;height:18.5px;background:#d4d4d4"></div>
<div class="a" style="left:144.0px;top:259.1px;width:1px;height:462.9px;background:#e4e4e4"></div>
<div class="a" style="left:255.0px;top:199px;width:1px;height:18.5px;background:#d4d4d4"></div>
<div class="a" style="left:255.0px;top:259.1px;width:1px;height:462.9px;background:#e4e4e4"></div>
<div class="a" style="left:366.0px;top:199px;width:1px;height:18.5px;background:#d4d4d4"></div>
<div class="a" style="left:366.0px;top:259.1px;width:1px;height:462.9px;background:#e4e4e4"></div>
<div class="a" style="left:477.0px;top:199px;width:1px;height:18.5px;background:#d4d4d4"></div>
<div class="a" style="left:477.0px;top:217.5px;width:1px;height:504.5px;background:#e4e4e4"></div>
<div class="a" style="left:608.0px;top:199px;width:1px;height:18.5px;background:#d4d4d4"></div>
<div class="a" style="left:608.0px;top:217.5px;width:1px;height:504.5px;background:#e4e4e4"></div>
<div class="a" style="left:777.0px;top:199px;width:1px;height:18.5px;background:#d4d4d4"></div>
<div class="a" style="left:777.0px;top:259.1px;width:1px;height:462.9px;background:#e4e4e4"></div>
<div class="a" style="left:871.0px;top:199px;width:1px;height:18.5px;background:#d4d4d4"></div>
<div class="a" style="left:871.0px;top:259.1px;width:1px;height:462.9px;background:#e4e4e4"></div>
<div class="a" style="left:966.0px;top:199px;width:1px;height:18.5px;background:#d4d4d4"></div>
<div class="a" style="left:966.0px;top:217.5px;width:1px;height:504.5px;background:#e4e4e4"></div>
<div class="a" style="left:1061.0px;top:199px;width:1px;height:18.5px;background:#d4d4d4"></div>
<div class="a" style="left:1061.0px;top:217.5px;width:1px;height:504.5px;background:#e4e4e4"></div>
<div class="a" style="left:0;top:258.6px;width:34px;height:1px;background:#d0d0d0"></div>
<div class="a" style="left:34px;top:258.6px;width:1166px;height:1px;background:#e4e4e4"></div>
<div class="a" style="left:0;top:300.2px;width:34px;height:1px;background:#d0d0d0"></div>
<div class="a" style="left:34px;top:300.2px;width:1166px;height:1px;background:#e4e4e4"></div>
<div class="a" style="left:0;top:341.8px;width:34px;height:1px;background:#d0d0d0"></div>
<div class="a" style="left:34px;top:341.8px;width:1166px;height:1px;background:#e4e4e4"></div>
<div class="a" style="left:0;top:383.4px;width:34px;height:1px;background:#d0d0d0"></div>
<div class="a" style="left:34px;top:383.4px;width:1166px;height:1px;background:#e4e4e4"></div>
<div class="a" style="left:0;top:425.0px;width:34px;height:1px;background:#d0d0d0"></div>
<div class="a" style="left:34px;top:425.0px;width:1166px;height:1px;background:#e4e4e4"></div>
<div class="a" style="left:0;top:466.6px;width:34px;height:1px;background:#d0d0d0"></div>
<div class="a" style="left:34px;top:466.6px;width:1166px;height:1px;background:#e4e4e4"></div>
<div class="a" style="left:0;top:508.2px;width:34px;height:1px;background:#d0d0d0"></div>
<div class="a" style="left:34px;top:508.2px;width:1166px;height:1px;background:#e4e4e4"></div>
<div class="a" style="left:0;top:549.8px;width:34px;height:1px;background:#d0d0d0"></div>
<div class="a" style="left:34px;top:549.8px;width:1166px;height:1px;background:#e4e4e4"></div>
<div class="a" style="left:0;top:591.4000000000001px;width:34px;height:1px;background:#d0d0d0"></div>
<div class="a" style="left:34px;top:591.4000000000001px;width:1166px;height:1px;background:#e4e4e4"></div>
<div class="a" style="left:0;top:633.0px;width:34px;height:1px;background:#d0d0d0"></div>
<div class="a" style="left:34px;top:633.0px;width:1166px;height:1px;background:#e4e4e4"></div>
<div class="a" style="left:0;top:674.6px;width:34px;height:1px;background:#d0d0d0"></div>
<div class="a" style="left:34px;top:674.6px;width:1166px;height:1px;background:#e4e4e4"></div>
<div class="a" style="left:0;top:716.2px;width:34px;height:1px;background:#d0d0d0"></div>
<div class="a" style="left:34px;top:716.2px;width:1166px;height:1px;background:#e4e4e4"></div>
<div class="a" style="left:34px;top:217.0px;width:1166px;height:1px;background:#d8d8d8"></div>
<div class="a" style="left:33px;top:217.5px;width:1px;height:504.5px;background:#cfcfcf"></div>
<div class="a" style="left:0;top:258.40000000000003px;width:1200px;height:1.4px;background:#c8c8c8"></div>
<div class="a" style="left:476.8px;top:195px;width:1.4px;height:527px;background:#c8c8c8"></div>
<svg style="left:0;top:195px" width="34" height="22"><path d="M14.7 19.8 L32 19.8 L32 2.7 Z" fill="#1f7246"/></svg>
<div class="t" style="left:69.25px;width:40px;text-align:center;top:199.2px;font-family:'Liberation Serif',serif;font-size:18px;color:#5a5a5a;transform:scaleX(0.8)">A</div>
<div class="t" style="left:180.0px;width:40px;text-align:center;top:199.2px;font-family:'Liberation Serif',serif;font-size:18px;color:#5a5a5a;transform:scaleX(0.8)">B</div>
<div class="t" style="left:291.0px;width:40px;text-align:center;top:199.2px;font-family:'Liberation Serif',serif;font-size:18px;color:#5a5a5a;transform:scaleX(0.8)">C</div>
<div class="t" style="left:402.0px;width:40px;text-align:center;top:199.2px;font-family:'Liberation Serif',serif;font-size:18px;color:#5a5a5a;transform:scaleX(0.8)">D</div>
<div class="t" style="left:523.0px;width:40px;text-align:center;top:199.2px;font-family:'Liberation Serif',serif;font-size:18px;color:#5a5a5a;transform:scaleX(0.8)">O</div>
<div class="t" style="left:673.0px;width:40px;text-align:center;top:199.2px;font-family:'Liberation Serif',serif;font-size:18px;color:#2f6f45;transform:scaleX(0.8)">P</div>
<div class="t" style="left:804.5px;width:40px;text-align:center;top:199.2px;font-family:'Liberation Serif',serif;font-size:18px;color:#5a5a5a;transform:scaleX(0.8)">Q</div>
<div class="t" style="left:899.0px;width:40px;text-align:center;top:199.2px;font-family:'Liberation Serif',serif;font-size:18px;color:#5a5a5a;transform:scaleX(0.8)">R</div>
<div class="t" style="left:994.0px;width:40px;text-align:center;top:199.2px;font-family:'Liberation Serif',serif;font-size:18px;color:#5a5a5a;transform:scaleX(0.8)">S</div>
<div class="t" style="left:1123.75px;width:40px;text-align:center;top:199.2px;font-family:'Liberation Serif',serif;font-size:18px;color:#5a5a5a;transform:scaleX(0.8)">T</div>
<div class="t" style="left:0;width:33px;text-align:center;top:241.10000000000002px;font-family:'Liberation Serif',serif;font-size:18px;color:#5a5a5a">1</div>
<div class="t" style="left:0;width:33px;text-align:center;top:282.7px;font-family:'Liberation Serif',serif;font-size:18px;color:#5a5a5a">2</div>
<div class="t" style="left:0;width:33px;text-align:center;top:324.3px;font-family:'Liberation Serif',serif;font-size:18px;color:#2f6f45">3</div>
<div class="t" style="left:0;width:33px;text-align:center;top:365.9px;font-family:'Liberation Serif',serif;font-size:18px;color:#5a5a5a">4</div>
<div class="t" style="left:0;width:33px;text-align:center;top:407.5px;font-family:'Liberation Serif',serif;font-size:18px;color:#5a5a5a">5</div>
<div class="t" style="left:0;width:33px;text-align:center;top:449.1px;font-family:'Liberation Serif',serif;font-size:18px;color:#5a5a5a">6</div>
<div class="t" style="left:0;width:33px;text-align:center;top:490.7px;font-family:'Liberation Serif',serif;font-size:18px;color:#5a5a5a">7</div>
<div class="t" style="left:0;width:33px;text-align:center;top:532.3px;font-family:'Liberation Serif',serif;font-size:18px;color:#5a5a5a">8</div>
<div class="t" style="left:0;width:33px;text-align:center;top:573.9000000000001px;font-family:'Liberation Serif',serif;font-size:18px;color:#5a5a5a">9</div>
<div class="t" style="left:0;width:33px;text-align:center;top:615.5px;font-family:'Liberation Serif',serif;font-size:18px;color:#5a5a5a">10</div>
<div class="t" style="left:0;width:33px;text-align:center;top:657.1px;font-family:'Liberation Serif',serif;font-size:18px;color:#5a5a5a">11</div>
<div class="t" style="left:0;width:33px;text-align:center;top:698.7px;font-family:'Liberation Serif',serif;font-size:18px;color:#5a5a5a">12</div>
<svg style="left:34px;top:259.1px" width="8" height="8"><path d="M0 0 L7 0 L0 7 Z" fill="#1a7a1a"/></svg>
<svg style="left:34px;top:300.7px" width="8" height="8"><path d="M0 0 L7 0 L0 7 Z" fill="#1a7a1a"/></svg>
<svg style="left:34px;top:342.3px" width="8" height="8"><path d="M0 0 L7 0 L0 7 Z" fill="#1a7a1a"/></svg>
<svg style="left:34px;top:383.9px" width="8" height="8"><path d="M0 0 L7 0 L0 7 Z" fill="#1a7a1a"/></svg>
<svg style="left:34px;top:425.5px" width="8" height="8"><path d="M0 0 L7 0 L0 7 Z" fill="#1a7a1a"/></svg>
<svg style="left:34px;top:467.1px" width="8" height="8"><path d="M0 0 L7 0 L0 7 Z" fill="#1a7a1a"/></svg>
<svg style="left:34px;top:508.7px" width="8" height="8"><path d="M0 0 L7 0 L0 7 Z" fill="#1a7a1a"/></svg>
<svg style="left:34px;top:550.3px" width="8" height="8"><path d="M0 0 L7 0 L0 7 Z" fill="#1a7a1a"/></svg>
<svg style="left:34px;top:591.9000000000001px" width="8" height="8"><path d="M0 0 L7 0 L0 7 Z" fill="#1a7a1a"/></svg>
<svg style="left:34px;top:633.5px" width="8" height="8"><path d="M0 0 L7 0 L0 7 Z" fill="#1a7a1a"/></svg>
<div class="t" style="left:34px;width:110.5px;text-align:center;top:229.10000000000002px;font-size:25px;color:#fff;">序号</div>
<div class="t" style="left:144.5px;width:111.0px;text-align:center;top:229.10000000000002px;font-size:25px;color:#fff;">姓名</div>
<div class="t" style="left:255.5px;width:111.0px;text-align:center;top:229.10000000000002px;font-size:25px;color:#fff;">性别</div>
<div class="t" style="left:366.5px;width:111.0px;text-align:center;top:229.10000000000002px;font-size:25px;color:#fff;">成绩</div>
<div class="t" style="left:34px;width:110.5px;text-align:center;top:270.7px;font-size:23px;color:#111;transform:scaleX(0.92);transform-origin:50% 50%;">001</div>
<div class="t" style="left:144.5px;width:111.0px;text-align:center;top:271.2px;font-size:24.5px;color:#111;">梅晓歌</div>
<div class="t" style="left:255.5px;width:111.0px;text-align:center;top:271.2px;font-size:24.5px;color:#111;">男</div>
<div class="t" style="left:366.5px;width:111.0px;text-align:center;top:270.7px;font-size:23px;color:#111;transform:scaleX(0.92);transform-origin:50% 50%;">100</div>
<div class="t" style="left:34px;width:110.5px;text-align:center;top:312.3px;font-size:23px;color:#111;transform:scaleX(0.92);transform-origin:50% 50%;">002</div>
<div class="t" style="left:144.5px;width:111.0px;text-align:center;top:312.8px;font-size:24.5px;color:#111;">艾鲜枝</div>
<div class="t" style="left:255.5px;width:111.0px;text-align:center;top:312.8px;font-size:24.5px;color:#111;">女</div>
<div class="t" style="left:366.5px;width:111.0px;text-align:center;top:312.3px;font-size:23px;color:#111;transform:scaleX(0.92);transform-origin:50% 50%;">99</div>
<div class="t" style="left:34px;width:110.5px;text-align:center;top:353.9px;font-size:23px;color:#111;transform:scaleX(0.92);transform-origin:50% 50%;">003</div>
<div class="t" style="left:144.5px;width:111.0px;text-align:center;top:354.4px;font-size:24.5px;color:#111;">林志为</div>
<div class="t" style="left:255.5px;width:111.0px;text-align:center;top:354.4px;font-size:24.5px;color:#111;">男</div>
<div class="t" style="left:366.5px;width:111.0px;text-align:center;top:353.9px;font-size:23px;color:#111;transform:scaleX(0.92);transform-origin:50% 50%;">98</div>
<div class="t" style="left:34px;width:110.5px;text-align:center;top:395.5px;font-size:23px;color:#111;transform:scaleX(0.92);transform-origin:50% 50%;">004</div>
<div class="t" style="left:144.5px;width:111.0px;text-align:center;top:396.0px;font-size:24.5px;color:#111;">吕青山</div>
<div class="t" style="left:255.5px;width:111.0px;text-align:center;top:396.0px;font-size:24.5px;color:#111;">男</div>
<div class="t" style="left:366.5px;width:111.0px;text-align:center;top:395.5px;font-size:23px;color:#111;transform:scaleX(0.92);transform-origin:50% 50%;">97</div>
<div class="t" style="left:34px;width:110.5px;text-align:center;top:437.1px;font-size:23px;color:#111;transform:scaleX(0.92);transform-origin:50% 50%;">005</div>
<div class="t" style="left:144.5px;width:111.0px;text-align:center;top:437.6px;font-size:24.5px;color:#111;">曹立新</div>
<div class="t" style="left:255.5px;width:111.0px;text-align:center;top:437.6px;font-size:24.5px;color:#111;">男</div>
<div class="t" style="left:366.5px;width:111.0px;text-align:center;top:437.1px;font-size:23px;color:#111;transform:scaleX(0.92);transform-origin:50% 50%;">96</div>
<div class="t" style="left:34px;width:110.5px;text-align:center;top:478.7px;font-size:23px;color:#111;transform:scaleX(0.92);transform-origin:50% 50%;">006</div>
<div class="t" style="left:144.5px;width:111.0px;text-align:center;top:479.2px;font-size:24.5px;color:#111;">李唐</div>
<div class="t" style="left:255.5px;width:111.0px;text-align:center;top:479.2px;font-size:24.5px;color:#111;">女</div>
<div class="t" style="left:366.5px;width:111.0px;text-align:center;top:478.7px;font-size:23px;color:#111;transform:scaleX(0.92);transform-origin:50% 50%;">95</div>
<div class="t" style="left:34px;width:110.5px;text-align:center;top:520.3px;font-size:23px;color:#111;transform:scaleX(0.92);transform-origin:50% 50%;">007</div>
<div class="t" style="left:144.5px;width:111.0px;text-align:center;top:520.8px;font-size:24.5px;color:#111;">小曾</div>
<div class="t" style="left:255.5px;width:111.0px;text-align:center;top:520.8px;font-size:24.5px;color:#111;">男</div>
<div class="t" style="left:366.5px;width:111.0px;text-align:center;top:520.3px;font-size:23px;color:#111;transform:scaleX(0.92);transform-origin:50% 50%;">94</div>
<div class="t" style="left:34px;width:110.5px;text-align:center;top:561.9000000000001px;font-size:23px;color:#111;transform:scaleX(0.92);transform-origin:50% 50%;">008</div>
<div class="t" style="left:144.5px;width:111.0px;text-align:center;top:562.4000000000001px;font-size:24.5px;color:#111;">乔胜利</div>
<div class="t" style="left:255.5px;width:111.0px;text-align:center;top:562.4000000000001px;font-size:24.5px;color:#111;">男</div>
<div class="t" style="left:366.5px;width:111.0px;text-align:center;top:561.9000000000001px;font-size:23px;color:#111;transform:scaleX(0.92);transform-origin:50% 50%;">93</div>
<div class="t" style="left:34px;width:110.5px;text-align:center;top:603.5px;font-size:23px;color:#111;transform:scaleX(0.92);transform-origin:50% 50%;">009</div>
<div class="t" style="left:144.5px;width:111.0px;text-align:center;top:604.0px;font-size:24.5px;color:#111;">三宝</div>
<div class="t" style="left:255.5px;width:111.0px;text-align:center;top:604.0px;font-size:24.5px;color:#111;">男</div>
<div class="t" style="left:366.5px;width:111.0px;text-align:center;top:603.5px;font-size:23px;color:#111;transform:scaleX(0.92);transform-origin:50% 50%;">92</div>
<div class="t" style="left:34px;width:110.5px;text-align:center;top:645.1px;font-size:23px;color:#111;transform:scaleX(0.92);transform-origin:50% 50%;">010</div>
<div class="t" style="left:144.5px;width:111.0px;text-align:center;top:645.6px;font-size:24.5px;color:#111;">老邱</div>
<div class="t" style="left:255.5px;width:111.0px;text-align:center;top:645.6px;font-size:24.5px;color:#111;">男</div>
<div class="t" style="left:366.5px;width:111.0px;text-align:center;top:645.1px;font-size:23px;color:#111;transform:scaleX(0.92);transform-origin:50% 50%;">91</div>
<div class="t" style="left:616.0px;top:231.10000000000002px;font-size:19px;color:#fff">满足其中一个条件</div>
<div class="t" style="left:777.5px;width:94.0px;text-align:center;top:230.10000000000002px;font-size:19px;color:#fff;">女</div>
<div class="t" style="left:871.5px;width:95.0px;text-align:center;top:230.10000000000002px;font-size:19px;color:#fff;transform:scaleX(0.9);transform-origin:50% 50%;">&gt;95</div>
<div class="t" style="left:608.5px;width:169.0px;text-align:center;top:273.2px;font-size:18.5px;color:#111;transform:scaleX(0.88);transform-origin:50% 50%;">001</div>
<div class="t" style="left:777.5px;width:94.0px;text-align:center;top:272.8px;font-size:18.7px;color:#111;">梅晓歌</div>
<div class="t" style="left:871.5px;width:95.0px;text-align:center;top:272.8px;font-size:18.7px;color:#111;">男</div>
<div class="t" style="left:966.5px;width:95.0px;text-align:center;top:273.2px;font-size:18.5px;color:#111;transform:scaleX(0.88);transform-origin:50% 50%;">100</div>
<div class="t" style="left:608.5px;width:169.0px;text-align:center;top:314.8px;font-size:18.5px;color:#111;transform:scaleX(0.88);transform-origin:50% 50%;">002</div>
<div class="t" style="left:777.5px;width:94.0px;text-align:center;top:314.40000000000003px;font-size:18.7px;color:#111;">艾鲜枝</div>
<div class="t" style="left:871.5px;width:95.0px;text-align:center;top:314.40000000000003px;font-size:18.7px;color:#111;">女</div>
<div class="t" style="left:966.5px;width:95.0px;text-align:center;top:314.8px;font-size:18.5px;color:#111;transform:scaleX(0.88);transform-origin:50% 50%;">99</div>
<div class="t" style="left:608.5px;width:169.0px;text-align:center;top:356.4px;font-size:18.5px;color:#111;transform:scaleX(0.88);transform-origin:50% 50%;">003</div>
<div class="t" style="left:777.5px;width:94.0px;text-align:center;top:356.0px;font-size:18.7px;color:#111;">林志为</div>
<div class="t" style="left:871.5px;width:95.0px;text-align:center;top:356.0px;font-size:18.7px;color:#111;">男</div>
<div class="t" style="left:966.5px;width:95.0px;text-align:center;top:356.4px;font-size:18.5px;color:#111;transform:scaleX(0.88);transform-origin:50% 50%;">98</div>
<div class="t" style="left:608.5px;width:169.0px;text-align:center;top:398.0px;font-size:18.5px;color:#111;transform:scaleX(0.88);transform-origin:50% 50%;">004</div>
<div class="t" style="left:777.5px;width:94.0px;text-align:center;top:397.6px;font-size:18.7px;color:#111;">吕青山</div>
<div class="t" style="left:871.5px;width:95.0px;text-align:center;top:397.6px;font-size:18.7px;color:#111;">男</div>
<div class="t" style="left:966.5px;width:95.0px;text-align:center;top:398.0px;font-size:18.5px;color:#111;transform:scaleX(0.88);transform-origin:50% 50%;">97</div>
<div class="t" style="left:608.5px;width:169.0px;text-align:center;top:439.6px;font-size:18.5px;color:#111;transform:scaleX(0.88);transform-origin:50% 50%;">005</div>
<div class="t" style="left:777.5px;width:94.0px;text-align:center;top:439.20000000000005px;font-size:18.7px;color:#111;">曹立新</div>
<div class="t" style="left:871.5px;width:95.0px;text-align:center;top:439.20000000000005px;font-size:18.7px;color:#111;">男</div>
<div class="t" style="left:966.5px;width:95.0px;text-align:center;top:439.6px;font-size:18.5px;color:#111;transform:scaleX(0.88);transform-origin:50% 50%;">96</div>
<div class="t" style="left:608.5px;width:169.0px;text-align:center;top:481.2px;font-size:18.5px;color:#111;transform:scaleX(0.88);transform-origin:50% 50%;">006</div>
<div class="t" style="left:777.5px;width:94.0px;text-align:center;top:480.8px;font-size:18.7px;color:#111;">李唐</div>
<div class="t" style="left:871.5px;width:95.0px;text-align:center;top:480.8px;font-size:18.7px;color:#111;">女</div>
<div class="t" style="left:966.5px;width:95.0px;text-align:center;top:481.2px;font-size:18.5px;color:#111;transform:scaleX(0.88);transform-origin:50% 50%;">95</div>
<div class="a" style="left:608.5px;top:299.7px;width:170.0px;height:43.6px;border:2px solid #2e6b48"></div>
<div class="a" style="left:775.5px;top:340.3px;width:5px;height:5px;background:#2e6b48;border:1px solid #fff"></div>
<div class="a" style="left:607.5px;top:258.1px;width:455.0px;height:251.59999999999997px;border:2px solid #d92d3a"></div>
</body></html>
